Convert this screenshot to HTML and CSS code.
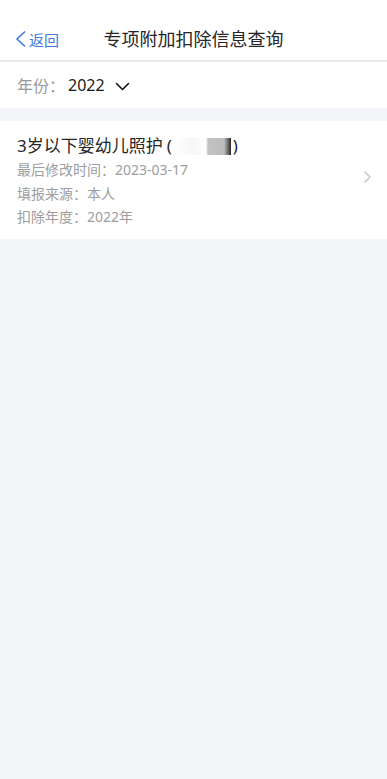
FILE: index.html
```html
<!DOCTYPE html>
<html lang="zh-CN">
<head>
<meta charset="utf-8">
<link rel="stylesheet" href="styles.css">
</head>
<body>
<header class="header">
  <div class="nav">
    <a class="back">
      <svg class="back-icon" width="11" height="16" viewBox="0 0 11 16"><polyline points="9.5,1 2,8 9.5,15" fill="none" stroke="#3f7ce0" stroke-width="1.7" stroke-linecap="round" stroke-linejoin="round"/></svg>
      <span>返回</span>
    </a>
    <h1 class="title">专项附加扣除信息查询</h1>
  </div>
</header>
<div class="year-bar">
  <span class="year-label">年份：</span>
  <span class="year-value">2022</span>
  <svg class="year-caret" width="15" height="9" viewBox="0 0 15 9"><polyline points="1.5,1.5 7.5,7.5 13.5,1.5" fill="none" stroke="#111" stroke-width="1.6" stroke-linecap="round" stroke-linejoin="round"/></svg>
</div>
<div class="list">
  <div class="card">
    <div class="card-body">
      <div class="card-title">3岁以下婴幼儿照护<span class="paren">(</span><span class="redact"></span><span class="paren">)</span></div>
      <div class="card-line">最后修改时间：2023-03-17</div>
      <div class="card-line">填报来源：本人</div>
      <div class="card-line">扣除年度：2022年</div>
    </div>
    <svg class="card-arrow" width="7" height="12" viewBox="0 0 7 12"><polyline points="1,1 6,6 1,11" fill="none" stroke="#c8c8cc" stroke-width="1.5" stroke-linecap="round" stroke-linejoin="round"/></svg>
  </div>
</div>
</body>
</html>
```

FILE: styles.css
```css
* { box-sizing: border-box; }
html, body {
  margin: 0;
  padding: 0;
  background: #f4f5f9;
  font-family: "Noto Sans", "Noto Sans CJK SC", sans-serif;
}
.header {
  background: #fff;
  height: 62px;
  padding-top: 18px;
  border-bottom: 2px solid #e9e9ec;
}
.nav {
  position: relative;
  height: 42px;
  display: flex;
  align-items: center;
  justify-content: center;
}
.back {
  position: absolute;
  left: 15px;
  top: 0;
  height: 42px;
  display: flex;
  align-items: center;
  gap: 3px;
  color: #3f7ce0;
  font-size: 15px;
}
.back-icon { display: block; }
.title {
  margin: 0;
  font-size: 18px;
  font-weight: 400;
  color: #262626;
  line-height: 24px;
}
.year-bar {
  background: #fff;
  height: 46px;
  display: flex;
  align-items: center;
  padding-left: 17px;
  font-size: 16px;
}
.year-label { color: #9a9a9a; }
.year-value { color: #1a1a1a; margin-left: 3px; }
.year-caret { margin-left: 10px; margin-top: 2px; }
.list { padding-top: 13px; }
.card {
  background: #fff;
  height: 118px;
  padding: 13px 17px 0 17px;
  display: flex;
  align-items: center;
}
.card-body { flex: 1; align-self: flex-start; }
.card-title {
  font-size: 17px;
  line-height: 24px;
  color: #262626;
  display: flex;
  align-items: center;
}
.paren { padding: 0 1px; }
.paren:first-of-type { margin-left: 3px; }
.redact {
  display: inline-block;
  width: 57px;
  height: 17px;
  margin: 0 1px;
  background: linear-gradient(to right, rgba(255,255,255,0) 0, rgba(240,240,240,0.6) 20px, rgba(255,255,255,0) 32px, #c2c2c2 34px, #bdbdbd 50px, #555 55px, #222 57px);
  filter: blur(0.6px);
}
.card-line {
  font-size: 14px;
  line-height: 23.5px;
  color: #9d9d9d;
}
.card-line:first-of-type { }
.card-arrow { margin-right: -1px; margin-top: -20px; }
```
